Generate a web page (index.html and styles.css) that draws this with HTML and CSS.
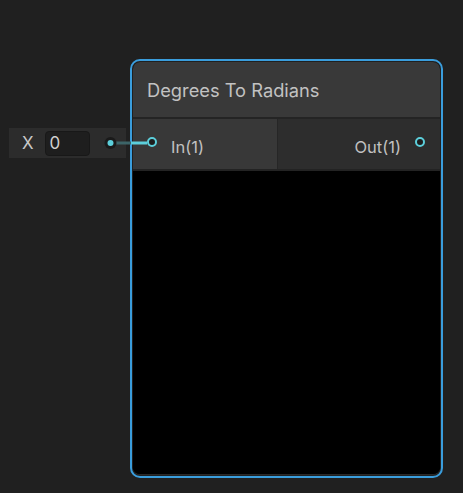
FILE: index.html
```html
<!DOCTYPE html>
<html lang="en">
<head>
  <meta charset="UTF-8">
  <title>Degrees To Radians</title>
  <link rel="stylesheet" href="styles.css">
</head>
<body>
  <div class="graph">
    <div class="field">
      <span class="field-label">X</span>
      <span class="field-input">0</span>
    </div>
    <svg class="edge" width="463" height="493">
      <line x1="111" y1="143" x2="131" y2="143" stroke="#3c6468" stroke-width="3"/>
      <line x1="131" y1="143" x2="147" y2="143" stroke="#5ccfdb" stroke-width="3"/>
      <circle cx="110.5" cy="143" r="6" fill="#1a1a1a"/>
      <circle cx="110.5" cy="143" r="3" fill="#5ccfdb"/>
    </svg>
    <div class="node">
      <div class="node-inner">
        <div class="node-title">Degrees To Radians</div>
        <div class="node-ports">
          <div class="inputs">
            <span class="port"></span>
            <span class="port-name">In(1)</span>
          </div>
          <div class="outputs">
            <span class="port-name">Out(1)</span>
            <span class="port"></span>
          </div>
        </div>
        <div class="node-preview"></div>
      </div>
    </div>
  </div>
</body>
</html>
```

FILE: styles.css
```css
body {
  margin: 0;
  background-color: #202020;
  font-family: Inter, "Noto Sans", sans-serif;
  color: #c4c4c4;
}
.graph {
  position: relative;
  width: 463px;
  height: 493px;
  overflow: hidden;
}
.field {
  position: absolute;
  left: 9px;
  top: 128px;
  width: 117px;
  height: 30px;
  box-sizing: border-box;
  background-color: #2c2c2c;
  display: flex;
  align-items: center;
  padding-left: 13px;
  gap: 11px;
  font-size: 17px;
}
.field-label {
  color: #c8c8c8;
}
.field-input {
  width: 45px;
  height: 25px;
  box-sizing: border-box;
  background-color: #1e1e1e;
  border: 1px solid #181818;
  border-radius: 4px;
  padding-left: 4px;
  line-height: 23px;
  color: #d0d0d0;
}
.edge {
  position: absolute;
  left: 0;
  top: 0;
  z-index: 2;
}
.node {
  position: absolute;
  left: 130px;
  top: 59px;
  width: 313px;
  height: 419px;
  box-sizing: border-box;
  border: 2px solid #3a9ddc;
  border-radius: 10px;
  padding: 1px;
  z-index: 1;
}
.node-inner {
  height: 100%;
  border-radius: 7px;
  overflow: hidden;
  background-color: #000000;
  display: flex;
  flex-direction: column;
  border-bottom: 1px solid #2a2a2a;
  box-sizing: border-box;
}
.node-title {
  height: 57px;
  flex-shrink: 0;
  background-color: #393939;
  border-bottom: 2px solid #242424;
  display: flex;
  align-items: center;
  padding-left: 14px;
  padding-top: 1px;
  box-sizing: border-box;
  font-size: 18.3px;
  color: #c2c2c2;
}
.node-ports {
  height: 50px;
  flex-shrink: 0;
  display: flex;
  border-bottom: 2px solid #232323;
  font-size: 16.5px;
  color: #c0c0c0;
}
.inputs {
  width: 145px;
  background-color: #383838;
  border-right: 1px solid #262626;
  display: flex;
  align-items: center;
  padding-left: 14px;
  gap: 14px;
  box-sizing: border-box;
}
.outputs {
  flex: 1;
  background-color: #2d2d2d;
  display: flex;
  align-items: center;
  justify-content: flex-end;
  padding-right: 15px;
  gap: 14px;
}
.port {
  width: 10px;
  height: 10px;
  box-sizing: border-box;
  border: 2px solid #5ccfdb;
  border-radius: 50%;
  background-color: #1e1e1e;
  margin-top: -4px;
}
.port-name {
  line-height: 1;
  margin-top: 6px;
}
.node-preview {
  flex: 1;
  background-color: #000000;
}
```
